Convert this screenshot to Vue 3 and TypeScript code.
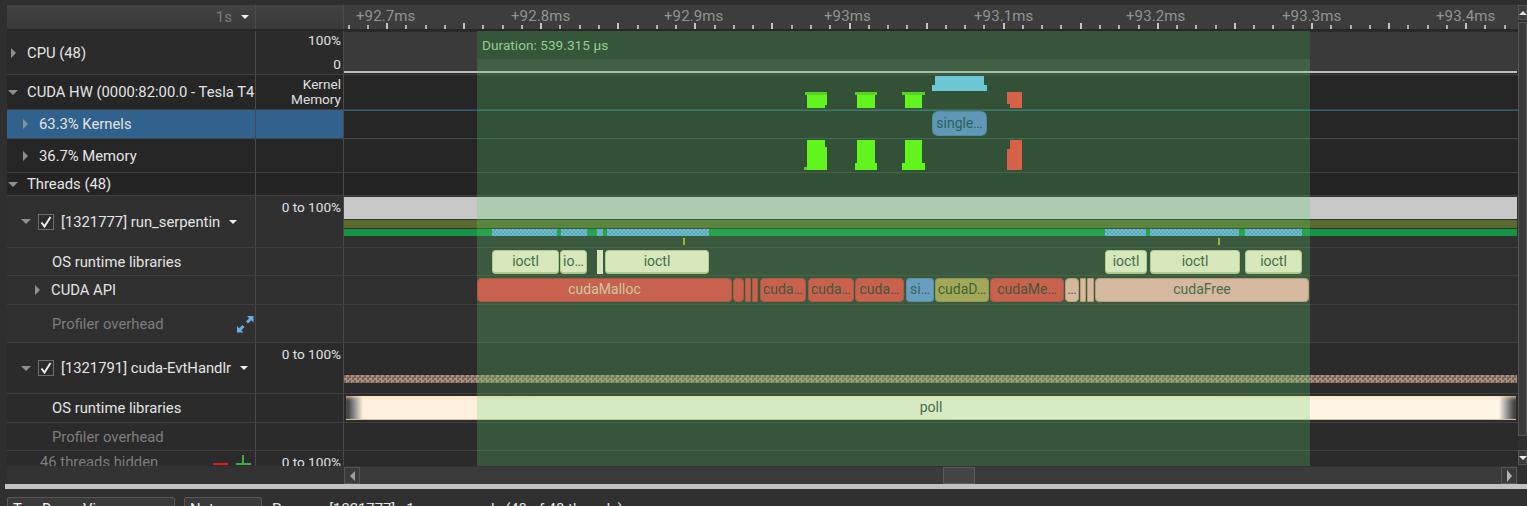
<template>
  <div class="page">
    <div class="top">
      <div class="main">
        <div class="ruler">
          <div class="ruler-cell zoom">
            <span>1s</span>
            <i class="tri down white"></i>
          </div>
          <div class="ruler-cell"></div>
          <div class="ruler-cell axis">
            <span v-for="l in axisLabels" :key="l.text" class="axis-label" :style="{ left: l.x - AXIS_X + 'px' }">{{ l.text }}</span>
            <span v-for="t in ticks" :key="t.x" class="tick" :class="{ major: t.major }" :style="{ left: t.x - AXIS_X + 'px' }"></span>
          </div>
        </div>

        <div class="rows">
          <div
            v-for="row in rows"
            :key="row.id"
            class="row"
            :class="row.kind"
            :style="{ height: row.h + 'px' }"
          >
            <div class="label" :style="{ paddingLeft: row.indent + 'px' }">
              <i v-if="row.arrow" class="tri" :class="row.arrow"></i>
              <span v-if="row.check" class="check">
                <svg width="12" height="12" viewBox="0 0 12 12"><path d="M1.5 6.5 L4.5 10.5 L10.5 1" fill="none" stroke="#eee" stroke-width="2" /></svg>
              </span>
              <span class="name">{{ row.name }}</span>
              <i v-if="row.menu" class="tri down white menu"></i>
              <svg v-if="row.expand" class="expand" width="17" height="17" viewBox="0 0 17 17">
                <path d="M10 0 H16.5 V6.5 L14.3 4.3 L11 7.5 L9 5.5 L12.2 2.2 Z M0 10 V16.5 H6.5 L4.3 14.3 L7.5 11 L5.5 9 L2.2 12.2 Z" fill="#6aaee0" />
              </svg>
              <span v-if="row.hiddenIcons" class="hide-icons">
                <i class="minus"></i>
                <i class="plus"></i>
              </span>
            </div>
            <div class="meta" :class="{ two: row.metaLines }">
              <span v-for="m in row.meta" :key="m">{{ m }}</span>
            </div>
            <div class="track">
              <div
                v-for="(s, i) in row.spans"
                :key="i"
                class="span"
                :class="s.cls"
                :style="box(s, row.top)"
              >{{ s.text }}</div>
            </div>
          </div>

          <div class="selection">
            <div class="sel-head">Duration: 539.315 µs</div>
          </div>
        </div>

        <div class="hbar">
          <div class="hbar-track">
            <span class="sbtn"><i class="tri left"></i></span>
            <span class="hthumb"></span>
            <span class="sbtn"><i class="tri right bright"></i></span>
          </div>
        </div>
      </div>

      <div class="vbar">
        <span class="vbtn"><i class="tri up white"></i></span>
        <span class="vthumb"></span>
        <span class="vbtn"><i class="tri down white"></i></span>
      </div>
    </div>

    <div class="splitter"></div>

    <div class="toolbar">
      <button class="tbtn first">Top-Down View</button>
      <button class="tbtn second">Notes</button>
      <span class="status">Process [1321777] : 1 process only (48 of 48 threads)</span>
    </div>
  </div>
</template>

<script setup lang="ts">
interface Bar { x0: number; x1: number; y0: number; y1: number; cls: string; text?: string }
interface Row {
  id: string; kind: string; h: number; top: number; indent: number; name: string
  arrow?: string; check?: boolean; menu?: boolean; expand?: boolean; hiddenIcons?: boolean
  meta: string[]; metaLines?: boolean; spans: Bar[]
}

const AXIS_X = 344
const ROWS_Y = 31

const axisLabels = [
  { text: '+92.7ms', x: 356 }, { text: '+92.8ms', x: 511 }, { text: '+92.9ms', x: 664 },
  { text: '+93ms', x: 824 }, { text: '+93.1ms', x: 974 }, { text: '+93.2ms', x: 1126 },
  { text: '+93.3ms', x: 1282 }, { text: '+93.4ms', x: 1436 },
]

const ticks = Array.from({ length: 61 }, (_, i) => ({
  x: Math.round(347.5 + i * 19.27),
  major: i % 4 === 2,
}))

const green = (x0: number, x1: number, y0: number, y1: number): Bar => ({ x0, x1, y0, y1, cls: 'kernel' })
const flange = (x0: number, x1: number, y0: number, y1: number): Bar => ({ x0, x1, y0, y1, cls: 'kernel dim' })
const red = (x0: number, x1: number, y0: number, y1: number): Bar => ({ x0, x1, y0, y1, cls: 'mem' })
const hatch = (x0: number, x1: number): Bar => ({ x0, x1, y0: 229, y1: 236, cls: 'hatch' })
const ioctl = (x0: number, x1: number, text = 'ioctl'): Bar => ({ x0, x1, y0: 250, y1: 274, cls: 'pill light', text })
const api = (x0: number, x1: number, cls: string, text = ''): Bar => ({ x0, x1, y0: 278, y1: 302, cls: 'pill ' + cls, text })

const spec: Omit<Row, 'top'>[] = [
  {
    id: 'cpu', kind: 'cpu', h: 44, indent: 4, name: 'CPU (48)', arrow: 'right', meta: ['100%', '0'], metaLines: true,
    spans: [{ x0: 344, x1: 1517, y0: 71, y1: 73, cls: 'cpu-line' }],
  },
  {
    id: 'hw', kind: 'dark', h: 35, indent: 1, name: 'CUDA HW (0000:82:00.0 - Tesla T4', arrow: 'down', meta: ['Kernel', 'Memory'], metaLines: true,
    spans: [
      flange(805, 827, 92, 95), green(807, 827, 95, 105), green(807, 825, 105, 108),
      flange(855, 877, 92, 95), green(857, 875, 95, 108),
      flange(902, 925, 92, 95), green(905, 922, 95, 108),
      { x0: 935, x1: 984, y0: 76, y1: 85, cls: 'cyan' }, { x0: 932, x1: 987, y0: 85, y1: 91, cls: 'cyan' },
      red(1007, 1022, 92, 104), red(1010, 1022, 104, 108),
    ],
  },
  {
    id: 'kernels', kind: 'dark selected', h: 29, indent: 16, name: '63.3% Kernels', arrow: 'right', meta: [],
    spans: [{ x0: 932, x1: 987, y0: 111, y1: 136, cls: 'pill blue', text: 'single…' }],
  },
  {
    id: 'memory', kind: 'dark', h: 34, indent: 16, name: '36.7% Memory', arrow: 'right', meta: [],
    spans: [
      green(807, 825, 140, 147), green(807, 827, 147, 167), flange(804, 807, 167, 170), green(807, 827, 167, 170),
      green(857, 875, 140, 163), green(855, 877, 163, 170),
      green(905, 922, 140, 163), green(902, 925, 163, 170),
      red(1010, 1022, 140, 144), red(1007, 1022, 149, 170), red(1010, 1022, 144, 149),
    ],
  },
  { id: 'threads', kind: 'darkest', h: 23, indent: 1, name: 'Threads (48)', arrow: 'down', meta: [], spans: [] },
  {
    id: 't1', kind: 'light', h: 52, indent: 14, name: '[1321777] run_serpentin', arrow: 'down', check: true, menu: true, meta: ['0 to 100%'],
    spans: [
      { x0: 344, x1: 1517, y0: 197, y1: 219, cls: 'gray' },
      { x0: 344, x1: 1517, y0: 220, y1: 228, cls: 'olive' },
      { x0: 344, x1: 1517, y0: 229, y1: 236, cls: 'green' },
      hatch(492, 557), hatch(561, 587), hatch(597, 603), hatch(607, 709),
      hatch(1105, 1146), hatch(1150, 1239), hatch(1245, 1302),
      { x0: 683, x1: 685, y0: 238, y1: 245, cls: 'yellow' },
      { x0: 1218, x1: 1220, y0: 238, y1: 245, cls: 'yellow' },
    ],
  },
  {
    id: 'os1', kind: 'light', h: 28, indent: 45, name: 'OS runtime libraries', meta: [],
    spans: [
      ioctl(492, 559), ioctl(560, 587, 'io…'), { x0: 597, x1: 603, y0: 250, y1: 274, cls: 'plain-light' },
      ioctl(605, 709), ioctl(1105, 1147), ioctl(1150, 1240), ioctl(1245, 1302),
    ],
  },
  {
    id: 'api', kind: 'light', h: 29, indent: 28, name: 'CUDA API', arrow: 'right', meta: [],
    spans: [
      api(477, 732, 'red pale-text', 'cudaMalloc'), api(733, 744, 'red'), api(745, 751, 'red flat'), api(752, 758, 'red flat'),
      api(760, 806, 'red', 'cuda…'), api(808, 854, 'red', 'cuda…'), api(855, 904, 'red', 'cuda…'),
      api(906, 934, 'si', 'si…'), api(935, 989, 'oliv', 'cudaD…'), api(990, 1064, 'red', 'cudaMe…'),
      api(1065, 1079, 'salmon', '…'), api(1080, 1086, 'salmon flat'), api(1087, 1094, 'salmon flat'),
      api(1095, 1309, 'salmon', 'cudaFree'),
    ],
  },
  { id: 'prof1', kind: 'light muted', h: 38, indent: 45, name: 'Profiler overhead', expand: true, meta: [], spans: [] },
  {
    id: 't2', kind: 'mid', h: 51, indent: 14, name: '[1321791] cuda-EvtHandlr', arrow: 'down', check: true, menu: true, meta: ['0 to 100%'],
    spans: [{ x0: 344, x1: 1517, y0: 375, y1: 383, cls: 'hatch-salmon' }],
  },
  {
    id: 'os2', kind: 'mid', h: 29, indent: 45, name: 'OS runtime libraries', meta: [],
    spans: [{ x0: 346, x1: 1516, y0: 396, y1: 420, cls: 'poll', text: 'poll' }],
  },
  { id: 'prof2', kind: 'mid muted', h: 28, indent: 45, name: 'Profiler overhead', meta: [], spans: [] },
  { id: 'hidden', kind: 'mid muted', h: 23, indent: 33, name: '46 threads hidden', hiddenIcons: true, meta: ['0 to 100%'], spans: [] },
]

let y = ROWS_Y
const rows: Row[] = spec.map((r) => {
  const row = { ...r, top: y }
  y += r.h
  return row
})

// spans are kept in page coordinates, easier to read off the timeline
function box(s: Bar, top: number) {
  return {
    left: s.x0 - AXIS_X + 'px',
    width: s.x1 - s.x0 + 'px',
    top: s.y0 - top + 'px',
    height: s.y1 - s.y0 + 'px',
  }
}
</script>

<style>
html, body { margin: 0; background: #303030; overflow: hidden; }
</style>

<style scoped>
.page { width: 1527px; height: 506px; overflow: hidden; background: #303030; font-family: Roboto, "Liberation Sans", sans-serif; font-size: 14.8px; color: #e4e4e4; }
.top { display: grid; grid-template-columns: 1fr 9px; height: 484px; padding-top: 5px; box-sizing: border-box; background: #2f2f2f; }
.main { padding-left: 7px; display: flex; flex-direction: column; min-width: 0; }

.ruler { display: grid; grid-template-columns: 249px 88px 1174px; height: 26px; flex: none; background: #282828; }
.ruler-cell { height: 24px; background: linear-gradient(#434343, #393939); border-right: 1px solid #4c4c4c; }
.ruler-cell:nth-child(1) { width: 248px; }
.ruler-cell:nth-child(2) { width: 87px; }
.ruler-cell.axis { width: 1174px; border-right: 0; background: #3d3d3d; position: relative; overflow: hidden; }
.zoom { display: flex; align-items: center; justify-content: flex-end; gap: 9px; color: #7b7b7b; font-size: 15px; }
.zoom .tri { margin-right: 6px; }
.axis-label { position: absolute; top: 2px; color: #939393; font-size: 15px; letter-spacing: 0.1px; white-space: nowrap; }
.tick { position: absolute; top: 20px; width: 2px; height: 4px; background: #b0b0b0; }
.tick.major { top: 18px; height: 6px; background: #c4c4c4; }

.rows { position: relative; height: 435px; flex: none; overflow: hidden; }
.row { display: grid; grid-template-columns: 249px 88px 1174px; box-sizing: border-box; border-bottom: 1px solid #3f3f3f; background: #2b2b2b; }
.row.cpu .track { background: linear-gradient(#3a3a3a 41px, #2a2a2a 41px); box-shadow: inset 0 1px 0 #2b2b2b; }
.row.dark { background: #262626; }
.row.darkest { background: #242424; }
.row.light { background: #303030; }
.row.mid { background: #2b2b2b; }
.row.selected .label, .row.selected .meta { background: #31618d; }
.row.selected { border-bottom-color: #3f4a50; }
.row.selected .track { box-shadow: inset 0 1px 0 #2b5f78; }
.row.muted .name { color: #7d7d7d; }

.label { position: relative; display: flex; align-items: center; border-right: 1px solid #4a4a4a; white-space: nowrap; overflow: hidden; }
.label .name { flex: none; }
.label .tri.right { flex: none; margin-right: 11px; }
.label .tri.down { flex: none; margin-right: 9px; }
.check { width: 16px; height: 16px; flex: none; box-sizing: border-box; border: 1px solid #6e6e6e; background: #2c2c2c; display: flex; align-items: center; justify-content: center; margin: 0 7px 0 -2px; }
.label .tri.menu { margin-left: 9px; margin-right: 0; }
.expand { position: absolute; left: 230px; top: 11px; }
.hide-icons { position: absolute; left: 206px; top: 0; width: 40px; height: 23px; }
.minus { position: absolute; left: 0; top: 12px; width: 15px; height: 2px; background: #e01c1c; }
.plus { position: absolute; left: 23px; top: 12px; width: 15px; height: 2px; background: #3fae3f; }
.plus::after { content: ""; position: absolute; left: 6px; top: -8px; width: 2px; height: 10px; background: #3fae3f; }

.meta { display: flex; flex-direction: column; align-items: flex-end; padding: 4px 2px 0 0; border-right: 1px solid #4a4a4a; font-size: 13.6px; line-height: 15px; color: #e0e0e0; }
.row.cpu .meta { justify-content: space-between; padding: 2px 2px 2px 0; }
.row.dark .meta.two { padding-top: 2px; line-height: 15px; }

.track { position: relative; }
.span { position: absolute; box-sizing: border-box; white-space: nowrap; overflow: hidden; text-align: center; font-size: 14px; }

.cpu-line { background: #bdbdbd; }
.kernel { background: #64ff05; }
.kernel.dim { background: #5ad011; }
.mem { background: #ff3d40; }
.cyan { background: #71c4f8; }
.gray { background: #c8c8c8; }
.olive { background: #5b6b2f; }
.green { background: #149444; }
.yellow { background: #c9a20e; }
.plain-light { background: #ffeed8; }
.hatch { background: conic-gradient(#5f98d8 25%, #6eb8ee 0 50%, #5f98d8 0 75%, #6eb8ee 0) 0 0 / 4px 4px; }
.hatch-salmon { background: conic-gradient(#a89080 25%, #7a6458 0 50%, #a89080 0 75%, #7a6458 0) 0 0 / 5px 5px; }

.pill { border-radius: 4px; border: 1px solid rgba(0, 0, 0, 0.15); line-height: 21px; color: #2f2f2f; }
.pill.flat { border-radius: 1px; }
.pill.light { background: #ffeed8; border-bottom: 2px solid #cfc6a0; border-color: #c8c89a; color: #404a40; }
.pill.red { background: #ec3c46; color: #3c3028; border-color: #c0333a; }
.pill.pale-text { color: #f0c4b4; }
.pill.si { background: #6e8ddd; color: #25405a; }
.pill.blue { background: #6184d2; color: #1c3c50; line-height: 22px; border-radius: 6px; }
.pill.oliv { background: #bb9955; color: #334020; }
.pill.salmon { background: #fcafb3; color: #4a4a38; border-color: #d98878; }
.poll { background: linear-gradient(90deg, #2b2b2b 0, #8a8a8a 8px, #fff1dd 17px, #fff4e6 calc(100% - 17px), #8a8a8a calc(100% - 8px), #2b2b2b 100%); color: #3c4a3c; line-height: 22px; border-bottom: 1px solid #d8c49c; box-shadow: inset 0 3px 4px -2px #ffdcae; }

.selection { position: absolute; left: 470px; top: 0; width: 833px; height: 435px; background: rgba(93, 211, 104, 0.25); pointer-events: none; }
.sel-head { height: 28px; background: #37553a; color: #8fcf8f; font-size: 13.7px; line-height: 28px; padding-left: 5px; }

.hbar { height: 18px; flex: none; background: #333; padding-left: 337px; }
.hbar-track { display: flex; justify-content: space-between; align-items: stretch; width: 1173px; height: 17px; margin-top: 1px; background: #3b3b3b; position: relative; }
.sbtn { width: 16px; box-sizing: border-box; border: 1px solid #555; background: #3a3a3a; display: flex; align-items: center; justify-content: center; }
.hthumb { position: absolute; left: 599px; top: 0; width: 32px; height: 17px; box-sizing: border-box; border: 1px solid #5a5a5a; background: #444; }

.vbar { display: flex; flex-direction: column; gap: 2px; height: 460px; }
.vbtn { height: 15px; flex: none; box-sizing: border-box; border: 1px solid #555; background: #3c3c3c; display: flex; align-items: center; justify-content: center; }
.vthumb { flex: 1; box-sizing: border-box; border: 1px solid #555; background: #3a3a3a; margin-bottom: 12px; }

.splitter { height: 5px; margin-left: 5px; background: #c2c2c2; }

.toolbar { display: flex; align-items: flex-start; padding: 8px 0 0 7px; height: 17px; }
.tbtn { height: 24px; box-sizing: border-box; border: 1px solid #585858; border-radius: 2px; background: #3a3a3a; color: #f0f0f0; font: 14.8px Roboto, sans-serif; text-align: left; padding: 2px 5px; }
.tbtn.first { width: 168px; }
.tbtn.second { width: 78px; margin-left: 9px; }
.status { margin-left: 10px; line-height: 24px; white-space: nowrap; color: #e4e4e4; }

.tri { display: inline-block; width: 0; height: 0; border-style: solid; border-color: transparent; }
.tri.right { border-width: 5px 0 5px 5px; border-left-color: #8f8f8f; }
.tri.left { border-width: 5px 5px 5px 0; border-right-color: #a0a0a0; }
.tri.down { border-width: 5px 5px 0 5px; border-top-color: #8f8f8f; }
.tri.up { border-width: 0 4px 4px 4px; border-bottom-color: #ddd; }
.tri.white.down { border-width: 4px 4px 0 4px; border-top-color: #eee; }
.tri.bright { border-left-color: #b4b4b4; border-width: 6px 0 6px 5px; }
</style>
